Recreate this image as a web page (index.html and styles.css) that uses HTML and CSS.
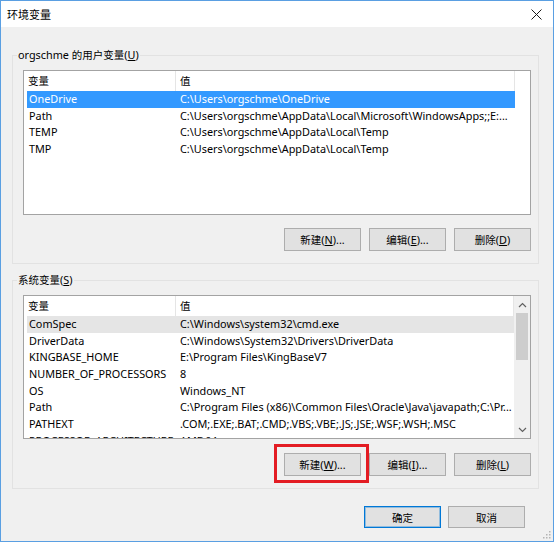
FILE: index.html
```html
<!DOCTYPE html>
<html lang="zh-CN">
<head>
<meta charset="utf-8">
<title>环境变量</title>
<link rel="stylesheet" href="styles.css">
</head>
<body>
<div class="window">
  <div class="titlebar">
    <span class="zh title">环境变量</span>
    <svg class="close" width="11" height="11" viewBox="0 0 11 11"><path d="M0.5 0.5L10.5 10.5M10.5 0.5L0.5 10.5" stroke="#1a1a1a" stroke-width="1" fill="none"/></svg>
  </div>
  <div class="body">
    <fieldset class="group">
      <legend>orgschme <span class="zh">的用户变量</span>(<u>U</u>)</legend>
      <div class="inner">
        <div class="list user">
          <div class="rows">
            <div class="row head"><span class="c1 zh">变量</span><span class="c2 zh">值</span></div>
            <div class="row sel"><span class="c1">OneDrive</span><span class="c2">C:\Users\orgschme\OneDrive</span></div>
            <div class="row"><span class="c1">Path</span><span class="c2">C:\Users\orgschme\AppData\Local\Microsoft\WindowsApps;;E:...</span></div>
            <div class="row"><span class="c1">TEMP</span><span class="c2">C:\Users\orgschme\AppData\Local\Temp</span></div>
            <div class="row"><span class="c1">TMP</span><span class="c2">C:\Users\orgschme\AppData\Local\Temp</span></div>
          </div>
        </div>
        <div class="buttons">
          <div class="btn"><span class="zh">新建</span>(<u>N</u>)...</div>
          <div class="btn"><span class="zh">编辑</span>(<u>E</u>)...</div>
          <div class="btn"><span class="zh">删除</span>(<u>D</u>)</div>
        </div>
      </div>
    </fieldset>
    <fieldset class="group second">
      <legend><span class="zh">系统变量</span>(<u>S</u>)</legend>
      <div class="inner">
        <div class="list sys">
          <div class="rows">
            <div class="row head"><span class="c1 zh">变量</span><span class="c2 zh">值</span></div>
            <div class="row inactive"><span class="c1">ComSpec</span><span class="c2">C:\Windows\system32\cmd.exe</span></div>
            <div class="row"><span class="c1">DriverData</span><span class="c2">C:\Windows\System32\Drivers\DriverData</span></div>
            <div class="row"><span class="c1">KINGBASE_HOME</span><span class="c2">E:\Program Files\KingBaseV7</span></div>
            <div class="row"><span class="c1">NUMBER_OF_PROCESSORS</span><span class="c2">8</span></div>
            <div class="row"><span class="c1">OS</span><span class="c2">Windows_NT</span></div>
            <div class="row"><span class="c1">Path</span><span class="c2">C:\Program Files (x86)\Common Files\Oracle\Java\javapath;C:\Pr...</span></div>
            <div class="row"><span class="c1">PATHEXT</span><span class="c2">.COM;.EXE;.BAT;.CMD;.VBS;.VBE;.JS;.JSE;.WSF;.WSH;.MSC</span></div>
            <div class="row"><span class="c1">PROCESSOR_ARCHITECTURE</span><span class="c2">AMD64</span></div>
          </div>
          <div class="scrollbar">
            <div class="arrow"><svg width="9" height="6" viewBox="0 0 9 6"><path d="M1 5L4.5 1.5L8 5" stroke="#606060" stroke-width="1.2" fill="none"/></svg></div>
            <div class="thumb"></div>
            <div class="track"></div>
            <div class="arrow down"><svg width="9" height="6" viewBox="0 0 9 6"><path d="M1 1L4.5 4.5L8 1" stroke="#606060" stroke-width="1.2" fill="none"/></svg></div>
          </div>
        </div>
        <div class="buttons sysbtns">
          <div class="btn mark"><span class="zh">新建</span>(<u>W</u>)...</div>
          <div class="btn"><span class="zh">编辑</span>(<u>I</u>)...</div>
          <div class="btn"><span class="zh">删除</span>(<u>L</u>)</div>
        </div>
      </div>
    </fieldset>
    <div class="footer">
      <div class="btn default"><span class="zh">确定</span></div>
      <div class="btn"><span class="zh">取消</span></div>
    </div>
  </div>
  <svg class="grip" width="8" height="8" viewBox="0 0 8 8"><g fill="#b4b4b4"><rect x="6" y="0" width="1.5" height="1.5"/><rect x="3" y="3" width="1.5" height="1.5"/><rect x="6" y="3" width="1.5" height="1.5"/><rect x="0" y="6" width="1.5" height="1.5"/><rect x="3" y="6" width="1.5" height="1.5"/><rect x="6" y="6" width="1.5" height="1.5"/></g></svg>
</div>
</body>
</html>
```

FILE: styles.css
```css
* { box-sizing: border-box; }
html, body { margin: 0; padding: 0; }
body {
  width: 554px;
  height: 542px;
  overflow: hidden;
  background: #ffffff;
  color: #000;
  font-family: "Noto Sans", "Noto Sans CJK SC", sans-serif;
  font-size: 10.85px;
}
.zh {
  font-family: "Noto Sans CJK SC", sans-serif;
  font-size: 10.5px;
}
u { text-underline-offset: 1px; }

.window {
  position: relative;
  width: 554px;
  height: 542px;
  border: 1px solid #5a9fe2;
  background: #f0f0f0;
  display: flex;
  flex-direction: column;
}
.titlebar {
  flex: none;
  height: 26px;
  background: #ffffff;
  display: flex;
  align-items: center;
  justify-content: space-between;
  padding: 0 11px 0 6px;
}
.title { font-size: 11px; }

.body {
  flex: 1;
  padding: 20px 14px 0 11px;
}
.group {
  margin: 0;
  padding: 0;
  border: 1px solid #e2e2e2;
  min-width: 0;
}
.group.second { margin-top: 8px; }
.group legend {
  padding: 0 1px;
  margin-left: 4px;
  line-height: 16px;
}
.inner { padding: 7px 7px 12px 10px; }

.list {
  display: flex;
  border: 1px solid #a3a3a3;
  background: #ffffff;
  padding-left: 3px;
  overflow: hidden;
}
.list.user { height: 145px; }
.list.sys { height: 144px; }
.rows { flex: none; width: 488px; }
.sys .rows { width: 487px; }
.row {
  display: flex;
  height: 16.7px;
  line-height: 16.7px;
  white-space: nowrap;
}
.user .row { height: 16.5px; line-height: 16.5px; }
.row.head, .user .row.head { height: 20px; line-height: 20px; }
.c1 { flex: none; width: 149px; padding-left: 2px; overflow: hidden; }
.c2 { flex: 1; padding-left: 4px; overflow: hidden; }
.head .c1 { padding-left: 1px; border-right: 1px solid #e5e5e5; }
.head .c2 { border-right: 1px solid #e5e5e5; }
.row.sel { background: #3399ff; color: #ffffff; }
.row.inactive { background: #e5e5e5; }

.scrollbar {
  flex: none;
  width: 16px;
  margin-left: auto;
  background: #f0f0f0;
  display: flex;
  flex-direction: column;
  align-items: center;
}
.arrow {
  flex: none;
  width: 16px;
  height: 17px;
  display: flex;
  align-items: center;
  justify-content: center;
}
.thumb { flex: none; width: 12px; height: 47px; background: #cdcdcd; }
.track { flex: 1; }

.buttons {
  display: flex;
  justify-content: flex-end;
  gap: 8px;
  margin-top: 13px;
}
.buttons.sysbtns { margin-top: 14px; }
.btn {
  width: 77px;
  height: 23px;
  border: 1px solid #adadad;
  background: #e1e1e1;
  display: flex;
  align-items: center;
  justify-content: center;
  white-space: nowrap;
}
.mark { position: relative; }
.mark::after {
  content: "";
  position: absolute;
  left: -11px;
  top: -10px;
  right: -9px;
  bottom: -8px;
  border: 3px solid #e31c23;
}
.footer {
  display: flex;
  justify-content: flex-end;
  gap: 7px;
  margin-top: 17px;
  padding-right: 14px;
}
.footer .btn { height: 22px; }
.btn.default {
  border-color: #0078d7;
  box-shadow: inset 0 0 0 1px rgba(0, 120, 215, 0.35);
}
.grip { position: absolute; right: 2px; bottom: 2px; }
```
